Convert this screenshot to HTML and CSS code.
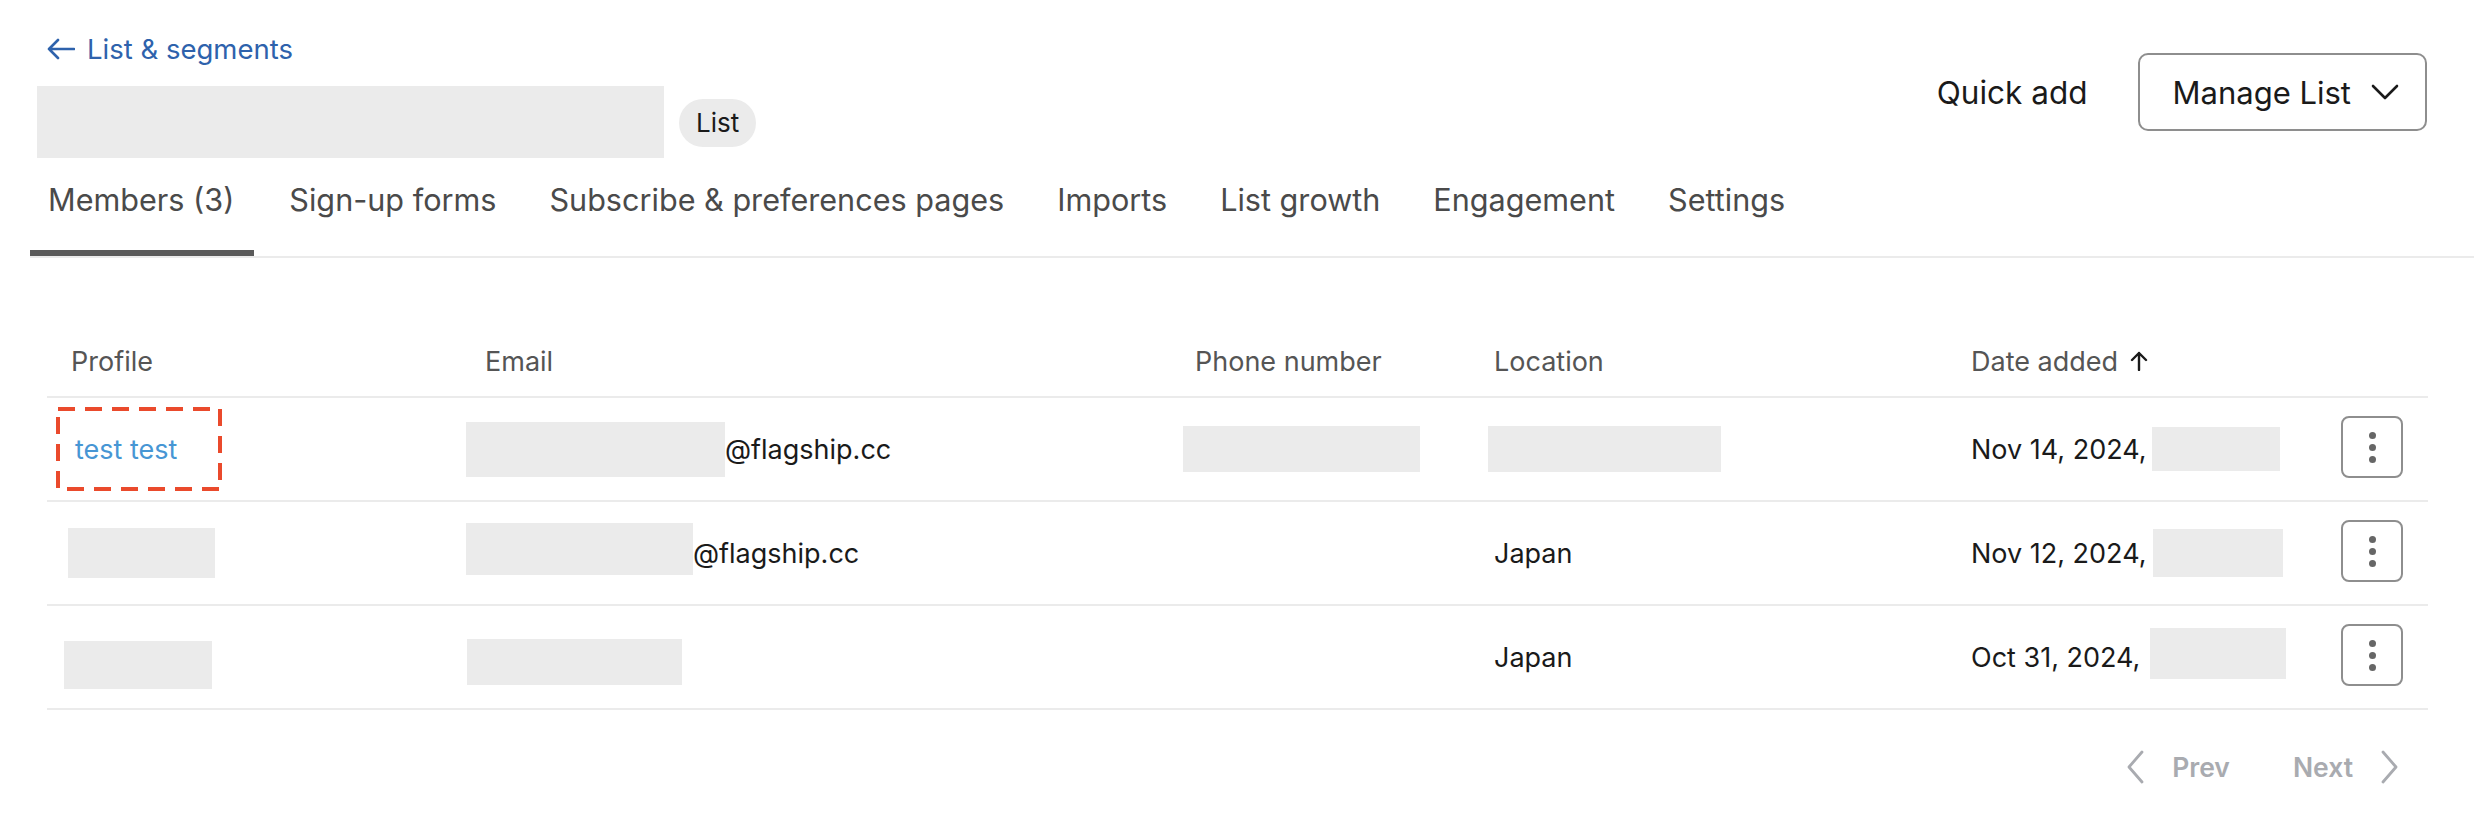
FILE: index.html
```html
<!DOCTYPE html>
<html lang="en">
<head>
    <meta charset="UTF-8">
    <meta name="viewport" content="width=device-width, initial-scale=1.0">
    <title>List members</title>
    <link rel="stylesheet" href="styles.css">
</head>
<body>
    <div class="page">
        <header class="page-head">
            <div class="head-left">
                <a class="back-link" href="#">
                    <svg class="back-arrow" width="28" height="22" viewBox="0 0 28 22"><path d="M11 2 L2 11 L11 20 M2 11 H27" fill="none" stroke="currentColor" stroke-width="2.6" stroke-linecap="round" stroke-linejoin="round"/></svg>
                    List &amp; segments
                </a>
                <div class="title-row">
                    <div class="redact title-redact"></div>
                    <span class="badge">List</span>
                </div>
            </div>
            <div class="head-actions">
                <button class="quick-add" type="button">Quick add</button>
                <button class="manage-btn" type="button">
                    Manage List
                    <svg width="28" height="16" viewBox="0 0 28 16"><path d="M2 2 L14 14 L26 2" fill="none" stroke="currentColor" stroke-width="2.6" stroke-linecap="round" stroke-linejoin="round"/></svg>
                </button>
            </div>
        </header>

        <nav class="tabs">
            <a class="tab active" href="#">Members (3)</a>
            <a class="tab" href="#">Sign-up forms</a>
            <a class="tab" href="#">Subscribe &amp; preferences pages</a>
            <a class="tab" href="#">Imports</a>
            <a class="tab" href="#">List growth</a>
            <a class="tab" href="#">Engagement</a>
            <a class="tab" href="#">Settings</a>
        </nav>

        <table class="members">
            <colgroup>
                <col class="col-profile">
                <col class="col-email">
                <col class="col-phone">
                <col class="col-location">
                <col class="col-date">
                <col class="col-menu">
            </colgroup>
            <thead>
                <tr>
                    <th>Profile</th>
                    <th>Email</th>
                    <th>Phone number</th>
                    <th>Location</th>
                    <th>
                        <span class="sort">Date added
                            <svg width="18" height="20" viewBox="0 0 18 20"><path d="M9 19 V2 M2 9 L9 2 L16 9" fill="none" stroke="currentColor" stroke-width="2.4" stroke-linecap="round" stroke-linejoin="round"/></svg>
                        </span>
                    </th>
                    <th></th>
                </tr>
            </thead>
            <tbody>
                <tr>
                    <td>
                        <span class="highlight">
                            <a class="profile-link" href="#">test test</a>
                            <svg class="dash-box" width="166" height="84" viewBox="0 0 166 84"><rect x="2" y="2" width="162" height="80" fill="none" stroke="#ea4a2c" stroke-width="4" stroke-dasharray="17 10"/></svg>
                        </span>
                    </td>
                    <td><div class="cell"><span class="redact email-1"></span>@flagship.cc</div></td>
                    <td><div class="cell"><span class="redact phone-1"></span></div></td>
                    <td><div class="cell"><span class="redact loc-1"></span></div></td>
                    <td><div class="cell date">Nov 14, 2024,<span class="redact time-1"></span></div></td>
                    <td class="menu-cell"><button class="kebab" type="button"><i></i><i></i><i></i></button></td>
                </tr>
                <tr>
                    <td><div class="cell"><span class="redact name-2"></span></div></td>
                    <td><div class="cell"><span class="redact email-2"></span>@flagship.cc</div></td>
                    <td></td>
                    <td>Japan</td>
                    <td><div class="cell date">Nov 12, 2024,<span class="redact time-2"></span></div></td>
                    <td class="menu-cell"><button class="kebab" type="button"><i></i><i></i><i></i></button></td>
                </tr>
                <tr>
                    <td><div class="cell"><span class="redact name-3"></span></div></td>
                    <td><div class="cell"><span class="redact email-3"></span></div></td>
                    <td></td>
                    <td>Japan</td>
                    <td><div class="cell date">Oct 31, 2024,<span class="redact time-3"></span></div></td>
                    <td class="menu-cell"><button class="kebab" type="button"><i></i><i></i><i></i></button></td>
                </tr>
            </tbody>
        </table>

        <div class="pager">
            <button class="pager-btn" type="button" disabled>
                <svg width="18" height="34" viewBox="0 0 18 34"><path d="M16 2 L3 17 L16 32" fill="none" stroke="currentColor" stroke-width="2.8" stroke-linecap="round" stroke-linejoin="round"/></svg>
                Prev
            </button>
            <button class="pager-btn" type="button" disabled>
                Next
                <svg width="18" height="34" viewBox="0 0 18 34"><path d="M2 2 L15 17 L2 32" fill="none" stroke="currentColor" stroke-width="2.8" stroke-linecap="round" stroke-linejoin="round"/></svg>
            </button>
        </div>
    </div>
</body>
</html>
```

FILE: styles.css
```css
/* Page base */
body {
    margin: 0;
    background-color: #ffffff;
    color: #1a1a1a;
    font-family: Inter, "Noto Sans", Arial, sans-serif;
}

.page {
    padding: 32px 47px 0 47px;
}

button {
    font-family: inherit;
    background: none;
    border: none;
    padding: 0;
    cursor: pointer;
}

/* Redacted placeholders */
.redact {
    display: inline-block;
    background-color: #ebebeb;
    flex: none;
}

/* Header */
.page-head {
    display: flex;
    justify-content: space-between;
    align-items: flex-start;
}

.back-link {
    display: flex;
    align-items: center;
    gap: 12px;
    color: #2e62ac;
    text-decoration: none;
    font-size: 27.5px;
    line-height: 34px;
}

.title-row {
    display: flex;
    align-items: center;
    gap: 15px;
    margin: 20px 0 0 -10px;
}

.title-redact {
    width: 627px;
    height: 72px;
}

.badge {
    background-color: #ebebeb;
    color: #1a1a1a;
    font-size: 26px;
    line-height: 48px;
    padding: 0 17px;
    border-radius: 24px;
    margin-top: 2px;
}

.head-actions {
    display: flex;
    align-items: center;
    gap: 50px;
    margin-top: 21px;
}

.quick-add {
    font-size: 31.5px;
    color: #1a1a1a;
}

.manage-btn {
    display: flex;
    align-items: center;
    gap: 20px;
    height: 78px;
    padding: 0 26px 0 33px;
    border: 2px solid #8e8e8e;
    border-radius: 10px;
    font-size: 31px;
    color: #1a1a1a;
    box-sizing: border-box;
}

/* Tabs */
.tabs {
    display: flex;
    gap: 17px;
    margin: 24px -47px 0 -17px;
    border-bottom: 2px solid #ebebeb;
}

.tab {
    padding: 0 18px 32px;
    font-size: 30.6px;
    line-height: 36px;
    color: #4a4a4a;
    text-decoration: none;
    border-bottom: 6px solid transparent;
}

.tab.active {
    padding: 0 20px 32px 18px;
    border-bottom-color: #5a5a5a;
    border-radius: 3px 3px 0 0;
}

/* Members table */
.members {
    width: 2381px;
    margin-top: 68px;
    border-collapse: collapse;
    table-layout: fixed;
}

.col-profile { width: 414px; }
.col-email { width: 710px; }
.col-phone { width: 299px; }
.col-location { width: 477px; }
.col-menu { width: 112px; }

.members th {
    height: 70px;
    padding: 0 0 0 24px;
    text-align: left;
    font-weight: 400;
    font-size: 27px;
    color: #555555;
    border-bottom: 2px solid #ebebeb;
}

.sort {
    display: inline-flex;
    align-items: center;
    gap: 12px;
}

.sort svg {
    color: #1a1a1a;
}

.members td {
    height: 102px;
    padding: 0 0 0 24px;
    font-size: 27px;
    color: #1a1a1a;
    border-bottom: 2px solid #ebebeb;
    vertical-align: middle;
}

.cell {
    display: flex;
    align-items: center;
}

.date {
    gap: 5px;
}

.highlight {
    position: relative;
    display: inline-block;
    margin-left: 4px;
}

.profile-link {
    color: #4796d4;
    text-decoration: none;
}

.dash-box {
    position: absolute;
    left: -19px;
    top: 50%;
    margin-top: -42px;
}

.email-1 { width: 259px; height: 55px; margin-left: -19px; }
.phone-1 { width: 237px; height: 46px; margin-left: -12px; }
.loc-1 { width: 233px; height: 46px; margin-left: -6px; }
.time-1 { width: 128px; height: 44px; }

.name-2 { width: 147px; height: 50px; margin: 0 0 0 -3px; }
.email-2 { width: 227px; height: 52px; margin: 0 0 8px -19px; }
.time-2 { width: 130px; height: 48px; margin-left: 2px; }

.name-3 { width: 148px; height: 48px; margin: 16px 0 0 -7px; }
.email-3 { width: 215px; height: 46px; margin: 9px 0 0 -18px; }
.time-3 { width: 136px; height: 51px; margin: 0 0 8px 5px; }

.menu-cell {
    text-align: right;
}

.members td.menu-cell {
    padding: 0 25px 0 0;
}

.kebab {
    display: inline-flex;
    flex-direction: column;
    align-items: center;
    justify-content: center;
    gap: 5px;
    width: 62px;
    height: 62px;
    border: 2px solid #8e8e8e;
    border-radius: 8px;
    box-sizing: border-box;
    vertical-align: middle;
    margin-bottom: 4px;
}

.kebab i {
    width: 7px;
    height: 7px;
    border-radius: 50%;
    background-color: #666666;
}

/* Pagination */
.pager {
    display: flex;
    justify-content: flex-end;
    gap: 63px;
    padding: 40px 28px 0 0;
}

.pager-btn {
    display: flex;
    align-items: center;
    gap: 28px;
    font-size: 26.5px;
    font-weight: 600;
    color: #a9abb0;
}
```
